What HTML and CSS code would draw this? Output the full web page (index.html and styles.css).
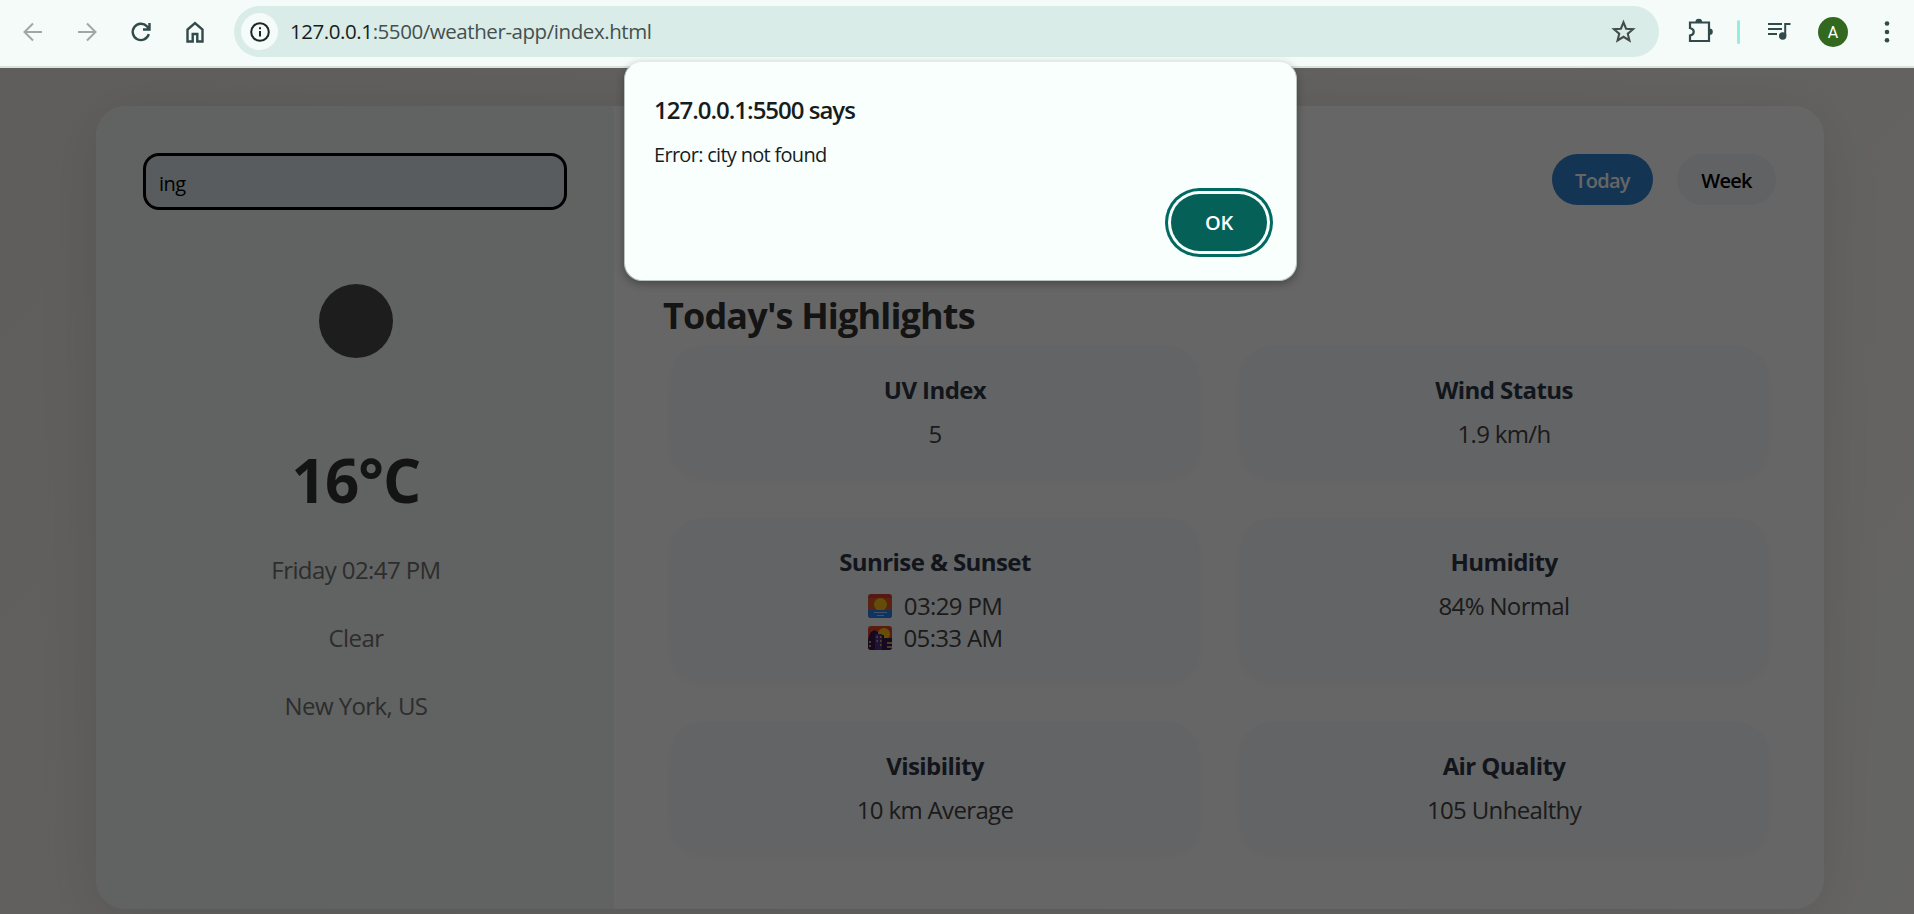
FILE: index.html
```html
<!DOCTYPE html>
<html lang="en">
<head>
<meta charset="utf-8">
<title>Weather App</title>
<link rel="stylesheet" href="styles.css">
</head>
<body>
<header class="toolbar">
  <div class="nav">
    <svg class="icon muted" viewBox="0 0 24 24"><path d="M21 12H4M12 3.5 3.5 12 12 20.500"/></svg>
    <svg class="icon muted" viewBox="0 0 24 24"><path d="M3 12h17M12 3.500 20.500 12 12 20.500"/></svg>
    <svg class="icon reload" viewBox="0 0 24 24"><path d="M19.800 14.200A8.200 8.200 0 1 1 18 6.400L20.500 9M20.500 3v6.500H14"/></svg>
    <svg class="icon home" viewBox="0 0 24 24"><path d="M4.500 21.500V9.500L12 3l7.500 6.500v12H14.300V14H9.700v7.500Z"/></svg>
  </div>
  <div class="address">
    <span class="info"><svg class="info-icon" viewBox="0 0 24 24"><circle cx="12" cy="12" r="9.600"/><path d="M12 11v6M12 6.700v2.300"/></svg></span>
    <span class="url"><span class="host">127.0.0.1</span>:5500/weather-app/index.html</span>
    <svg class="star" viewBox="0 0 24 24"><path d="M12 3.200 14.500 9.300 21.200 9.800 16.100 14.100 17.700 20.600 12 17.100 6.300 20.600 7.900 14.100 2.800 9.800 9.500 9.300Z"/></svg>
  </div>
  <div class="tools">
    <svg class="puzzle" viewBox="0 0 26 26"><path d="M3 4.500H22V23H3V17.500C8 16.500 8 11 3 10Z"/><path class="solid" d="M8.500 4a3.300 3.300 0 0 1 6.600 0ZM22.500 10.500a3.300 3.300 0 0 1 0 6.600Z"/></svg>
    <span class="divider"></span>
    <svg class="music" viewBox="0 0 24 20"><path d="M1 3h14M1 8h14M1 13h9M18.200 15V3H23.500"/><circle class="solid" cx="15.700" cy="15" r="3.700"/></svg>
    <span class="avatar">A</span>
    <svg class="dots" viewBox="0 0 6 24"><circle cx="3" cy="3.500" r="2.300"/><circle cx="3" cy="12" r="2.300"/><circle cx="3" cy="20.300" r="2.300"/></svg>
  </div>
</header>

<main class="page">
  <div class="wrapper">
    <aside class="sidebar">
      <input class="search" type="text" value="ing">
      <div class="weather-icon"></div>
      <h1 class="temp">16°C</h1>
      <p class="detail w-date">Friday 02:47 PM</p>
      <p class="detail w-clear">Clear</p>
      <p class="detail w-city">New York, US</p>
    </aside>
    <section class="content">
      <nav class="tabs">
        <button class="tab active">Today</button>
        <button class="tab">Week</button>
      </nav>
      <h2 class="heading">Today's Highlights</h2>
      <div class="cards">
        <article class="card"><h3>UV Index</h3><p>5</p></article>
        <article class="card"><h3>Wind Status</h3><p>1.9 km/h</p></article>
        <article class="card">
          <h3>Sunrise &amp; Sunset</h3>
          <p><svg class="emoji" viewBox="0 0 24 24"><rect width="24" height="24" rx="3" fill="#d8402e"/><rect y="4" width="24" height="13" fill="#dc5a2c"/><circle cx="12.500" cy="10.500" r="6.500" fill="#ffbe14"/><path d="M0 16h24v5a3 3 0 0 1-3 3H3a3 3 0 0 1-3-3Z" fill="#2c80ee"/><path d="M6 18.500h13M9 21.500h7" stroke="#a8cdff" stroke-width="1.200"/></svg><span>03:29 PM</span></p>
          <p><svg class="emoji" viewBox="0 0 24 24"><rect width="24" height="24" rx="3" fill="#e0482c"/><circle cx="16" cy="8" r="6" fill="#ffc414"/><path d="M0 14 2 7 6 4l4 2v3h6v3h8v9a3 3 0 0 1-3 3H3a3 3 0 0 1-3-3Z" fill="#35144f"/><path d="M7 8h7v16H7Z" fill="#4f3088"/><path d="M8.500 11h1.500M12 11h1.500M8.500 15h1.500M12 15h1.500M12 19h1.500M1 16h2M1 20h2M19 17h5M19 21h5" stroke="#f0c868" stroke-width="1.600"/></svg><span>05:33 AM</span></p>
        </article>
        <article class="card"><h3>Humidity</h3><p>84% Normal</p></article>
        <article class="card"><h3>Visibility</h3><p>10 km Average</p></article>
        <article class="card"><h3>Air Quality</h3><p>105 Unhealthy</p></article>
      </div>
    </section>
  </div>
</main>

<div class="scrim"></div>
<div class="dialog" role="alertdialog">
  <h4 class="dialog-title">127.0.0.1:5500 says</h4>
  <p class="dialog-text">Error: city not found</p>
  <button class="ok">OK</button>
</div>
</body>
</html>
```
FILE: styles.css
```css
* { box-sizing: border-box; margin: 0; padding: 0; }
body {
  width: 1914px;
  height: 914px;
  overflow: hidden;
  font-family: "Open Sans", "Noto Sans", sans-serif;
  display: flex;
  flex-direction: column;
}
button, input { font-family: inherit; border: 0; }
svg { flex: none; fill: none; stroke: #304b49; stroke-width: 2; overflow: visible; }

.toolbar {
  height: 68px;
  flex: none;
  background: #f4fbf9;
  border-bottom: 2px solid #d8e3e0;
  display: flex;
  align-items: flex-start;
  position: relative;
}
.nav { width: 234px; height: 64px; padding-left: 21px; display: flex; align-items: center; gap: 30px; }
.icon { width: 24px; height: 24px; }
.muted { stroke: #9fa8a6; }
.reload, .home { stroke-width: 2.400; }
.address {
  margin-top: 6px;
  width: 1425px;
  height: 51px;
  border-radius: 26px;
  background: #daece8;
  display: flex;
  align-items: center;
  padding: 0 23px 0 7px;
}
.info { width: 37px; height: 37px; border-radius: 50%; background: #f4fbf9; display: flex; align-items: center; justify-content: center; }
.info-icon { width: 22px; height: 22px; stroke: #1b2625; stroke-width: 2.2; }
.url { flex: 1; margin: -2px 0 0 12px; font-size: 20.500px; letter-spacing: -0.430px; color: #44504e; white-space: nowrap; }
.host { color: #161d1c; }
.star { width: 25px; height: 25px; stroke: #434c4a; }
.tools { height: 64px; display: flex; align-items: center; }
.puzzle { width: 26px; height: 26px; margin: -2px 0 0 28px; stroke-width: 2.200; }
.solid { fill: #304b49; stroke: none; }
.divider { width: 3px; height: 24px; border-radius: 2px; background: #8ff0e2; margin-left: 24px; }
.music { width: 24px; height: 20px; margin: -3px 0 0 27px; stroke-width: 2; }
.avatar { width: 30px; height: 30px; border-radius: 50%; background: #33691e; color: #fff; font: 16px/31px Roboto, sans-serif; text-align: center; margin-left: 27px; }
.dots { width: 6px; height: 24px; margin-left: 36px; fill: #304b49; stroke: none; }

.page {
  flex: 1;
  min-height: 0;
  padding: 38px 90px 0 96px;
  background: linear-gradient(135deg, #f0ebe6, #fcfbf8);
}
.wrapper {
  width: 1728px;
  height: 803px;
  border-radius: 30px;
  background: #fff;
  box-shadow: 0 10px 60px rgba(0, 0, 0, 0.1);
  display: flex;
  overflow: hidden;
}
.sidebar {
  width: 518px;
  background: #f2f6f4;
  padding: 48px 47px 48px 49px;
  display: flex;
  flex-direction: column;
  align-items: center;
}
.search {
  align-self: flex-start;
  margin-left: -1px;
  width: 422px;
  height: 55px;
  border-radius: 15px;
  background: #dfe6ec;
  outline: 3px solid #000;
  outline-offset: -2px;
  padding: 4px 15px 0;
  font-size: 20px;
  letter-spacing: -0.500px;
  color: #000;
}
.weather-icon { width: 74px; height: 74px; margin-top: 75px; border-radius: 50%; background: #4a4a4a; }
.temp { margin-top: 81px; font-size: 60px; line-height: 82px; color: #333; letter-spacing: -0.900px; }
.detail { font-size: 24px; line-height: 32px; margin-top: 36px; color: #707070; letter-spacing: -0.580px; }
.w-date { margin-top: 33px; }

.content { flex: 1; padding: 48px; }
.tabs { display: flex; justify-content: flex-end; gap: 24px; }
.tab { height: 51px; width: 99px; border-radius: 26px; background: #f1f4f8; font-size: 20px; font-weight: 600; letter-spacing: -0.700px; color: #000; padding-top: 2px; }
.tab.active { width: 101px; background: #3182ce; color: #fff; }
.heading { margin-top: 87px; font-size: 36px; line-height: 48px; color: #333; padding-left: 1px; letter-spacing: -0.850px; }
.cards {
  margin-top: 6px;
  display: grid;
  grid-template-columns: 526px 526px;
  grid-template-rows: 129px 161px 129px;
  gap: 43px;
  padding-left: 10px;
}
.card { border-radius: 30px; background: #f8fafc; box-shadow: 0 4px 12px rgba(0, 0, 0, 0.04); padding-top: 27px; text-align: center; }
.card h3 { font-size: 24px; line-height: 34px; color: #2d3748; margin-bottom: 11px; letter-spacing: -0.580px; }
.card p { font-size: 24px; line-height: 32px; color: #444; display: flex; align-items: center; justify-content: center; gap: 12px; letter-spacing: -0.650px; }
.emoji { width: 24px; height: 24px; stroke: none; }

.scrim { position: absolute; left: 0; top: 68px; width: 1914px; height: 846px; background: rgba(0, 0, 0, 0.6); }
.dialog {
  position: absolute;
  left: 624px;
  top: 61px;
  width: 673px;
  height: 220px;
  border-radius: 18px;
  background: #f9fffd;
  border: 1px solid #b9c3c0;
  border-top-color: #e3ebe8;
  box-shadow: 0 3px 8px rgba(0, 0, 0, 0.3);
  padding: 32px 29px;
  display: flex;
  flex-direction: column;
}
.dialog-title { font-size: 24px; line-height: 32px; font-weight: 600; color: #161d1c; letter-spacing: -1px; }
.dialog-text { font-size: 20px; line-height: 28px; margin-top: 15px; color: #161d1c; letter-spacing: -0.700px; }
.ok {
  width: 96px;
  height: 57px;
  margin: 25px 0 0 517px;
  flex: none;
  border-radius: 29px;
  background: #056058;
  color: #fff;
  font-size: 20px;
  font-weight: 600;
  letter-spacing: -0.300px;
  box-shadow: 0 0 0 3px #f9fffd, 0 0 0 6px #006a62;
}
```
